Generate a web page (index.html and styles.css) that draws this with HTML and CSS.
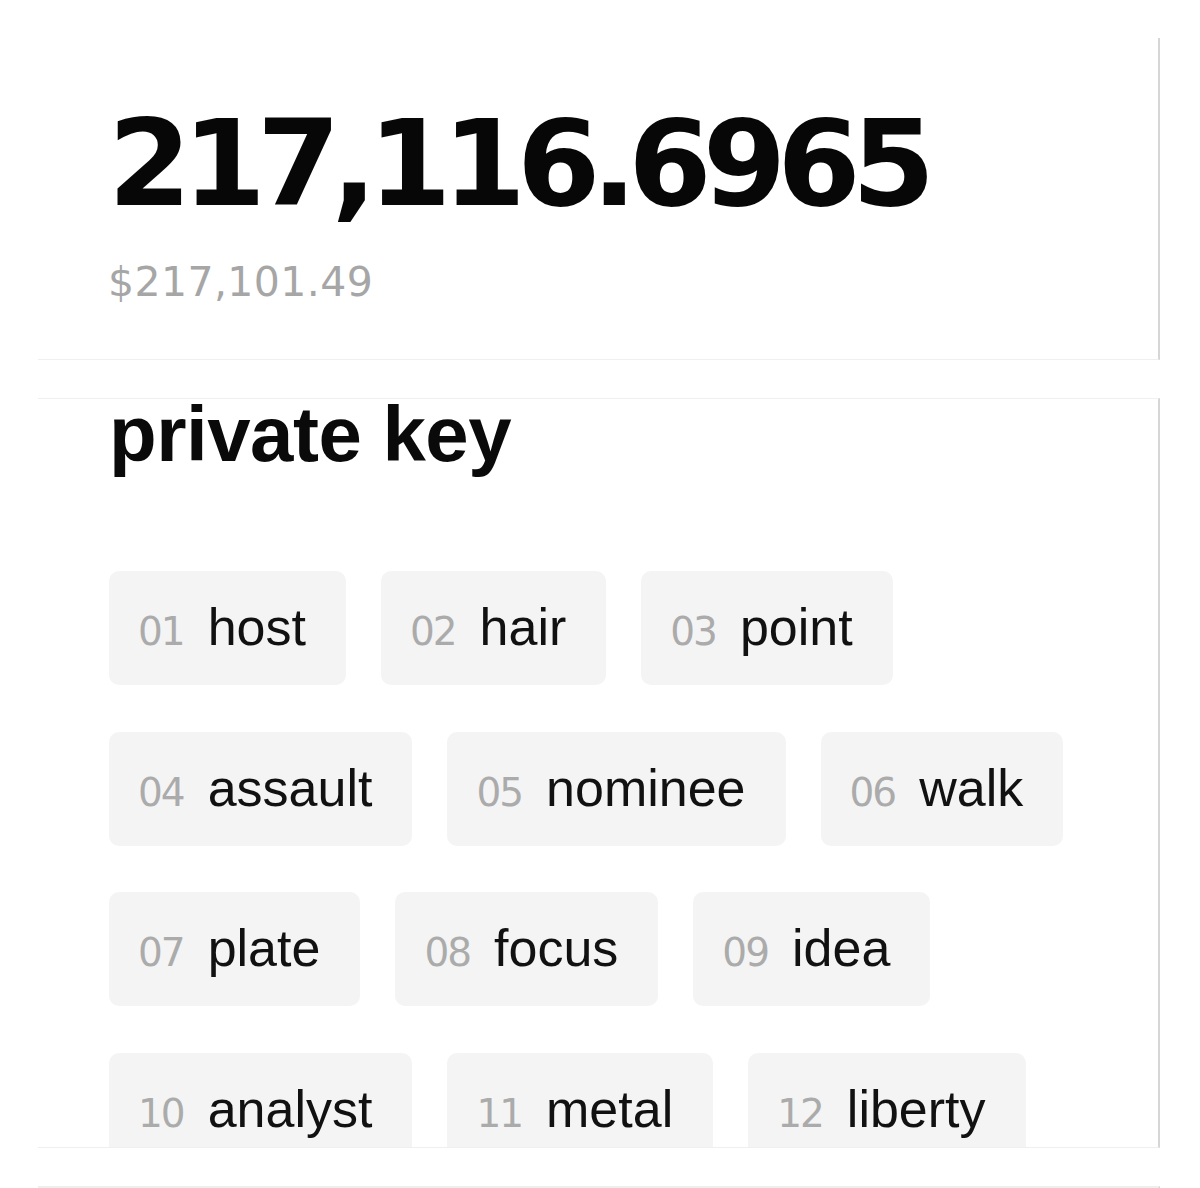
FILE: index.html
```html
<!DOCTYPE html>
<html lang="en">
<head>
<meta charset="utf-8">
<title>Wallet</title>
<link rel="stylesheet" href="styles.css">
</head>
<body>
<main class="page">
  <section class="card balance">
    <div class="amount">217,116.6965</div>
    <div class="fiat">$217,101.49</div>
  </section>
  <section class="card keycard">
    <h2 class="title">private key</h2>
    <div class="clip">
      <ul class="words">
        <li class="chip"><span class="idx">01</span><span class="word">host</span></li>
        <li class="chip"><span class="idx">02</span><span class="word">hair</span></li>
        <li class="chip"><span class="idx">03</span><span class="word">point</span></li>
        <li class="chip"><span class="idx">04</span><span class="word">assault</span></li>
        <li class="chip"><span class="idx">05</span><span class="word">nominee</span></li>
        <li class="chip"><span class="idx">06</span><span class="word">walk</span></li>
        <li class="chip"><span class="idx">07</span><span class="word">plate</span></li>
        <li class="chip"><span class="idx">08</span><span class="word">focus</span></li>
        <li class="chip"><span class="idx">09</span><span class="word">idea</span></li>
        <li class="chip"><span class="idx">10</span><span class="word">analyst</span></li>
        <li class="chip"><span class="idx">11</span><span class="word">metal</span></li>
        <li class="chip"><span class="idx">12</span><span class="word">liberty</span></li>
      </ul>
    </div>
  </section>
  <section class="card next"></section>
</main>
</body>
</html>
```
FILE: styles.css
```css
html, body {
  margin: 0;
  padding: 0;
  background: #ffffff;
}

body {
  font-family: "Liberation Sans", Arial, sans-serif;
  color: #0b0b0b;
}

.page {
  display: flex;
  flex-direction: column;
  gap: 38px;
  padding: 38px 40px 0 38px;
}

.card {
  background: #ffffff;
  border-right: 2px solid #d6d6d6;
  border-bottom: 1px solid #efefef;
  box-sizing: border-box;
}

.balance {
  padding: 66px 0 56px 70px;
}

.amount {
  font-family: "DejaVu Sans", sans-serif;
  font-weight: 700;
  font-size: 120px;
  line-height: 120px;
  letter-spacing: -9px;
  color: #070707;
}

.fiat {
  margin-top: 38px;
  font-family: "DejaVu Sans", sans-serif;
  font-size: 41px;
  line-height: 41px;
  color: #a6a6a6;
  letter-spacing: 0.4px;
}

.keycard {
  border-top: 1px solid #f0f0f0;
  padding: 0 70px 0 71px;
}

.title {
  margin: -8px 0 0 0;
  font-family: "Liberation Sans", Arial, sans-serif;
  font-weight: 700;
  font-size: 78px;
  line-height: 87px;
  letter-spacing: -0.5px;
  color: #0a0a0a;
}

.clip {
  margin-top: 93px;
  height: 576px;
  overflow: hidden;
}

.words {
  list-style: none;
  margin: 0;
  padding: 0;
  display: flex;
  flex-wrap: wrap;
  column-gap: 35px;
  row-gap: 46.5px;
}

.chip {
  display: flex;
  align-items: baseline;
  background: #f4f4f4;
  border-radius: 10px;
  padding: 30px 40px 32px 29px;
  box-sizing: border-box;
  height: 114px;
}

.idx {
  font-family: "DejaVu Sans", sans-serif;
  font-size: 39px;
  line-height: 52px;
  letter-spacing: -2px;
  color: #ababab;
  margin-right: 24px;
}

.word {
  font-family: "Liberation Sans", Arial, sans-serif;
  font-size: 52px;
  line-height: 52px;
  color: #111111;
}

.next {
  height: 200px;
  border-top: 2px solid #eeeeee;
  border-bottom: none;
}
```
